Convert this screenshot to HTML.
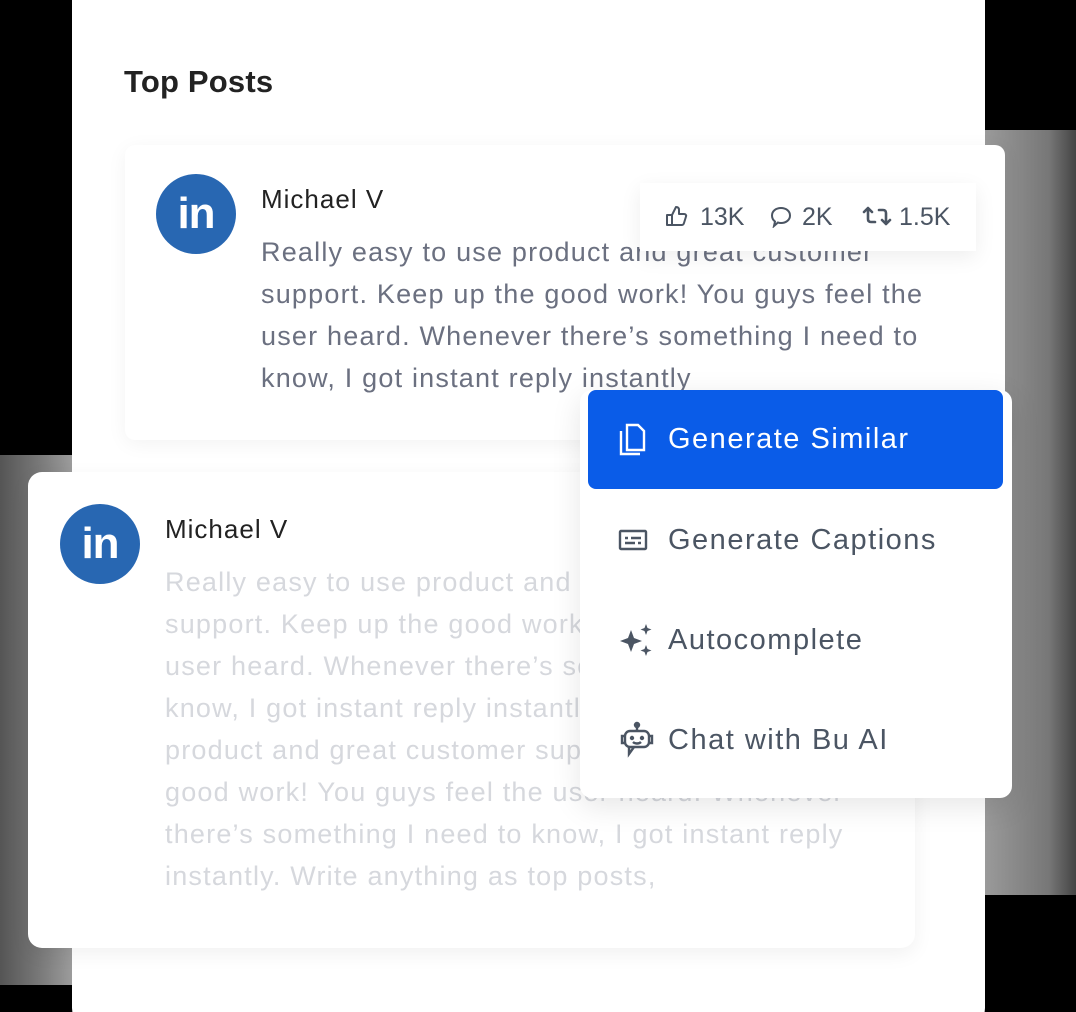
<!DOCTYPE html>
<html><head><meta charset="utf-8"><style>
*{margin:0;padding:0;box-sizing:border-box}
html,body{width:1076px;height:1012px;overflow:hidden}
body{background:#000;position:relative;font-family:"Liberation Sans",sans-serif}
.abs{position:absolute}
.noiseR{left:985px;top:130px;width:91px;height:765px;background:linear-gradient(90deg,#9a9a9a,#777 70%,#444)}
.noiseL{left:0;top:455px;width:76px;height:530px;background:linear-gradient(270deg,#a0a0a0,#777 50%,#555)}
.main{left:72px;top:-30px;width:913px;height:1060px;background:#fff;border-radius:22px}
.title{left:124px;top:64px;font-size:31px;font-weight:bold;color:#222;letter-spacing:0.2px}
.card1{left:125px;top:145px;width:880px;height:295px;background:#fff;box-shadow:0 4px 20px rgba(0,0,0,.05);border-radius:10px}
.avatar{width:80px;height:80px;border-radius:50%;background:#2867b2;color:#fff;font-weight:bold;font-size:44px;text-align:center;line-height:80px;letter-spacing:-1px}
.name{font-size:26px;color:#222;letter-spacing:1px}
.body{font-size:27px;line-height:42px;color:#6b7080;letter-spacing:1.2px;white-space:nowrap}
.stats{left:640px;top:183px;width:336px;height:68px;background:#fff;box-shadow:0 6px 20px rgba(0,0,0,.07);font-size:25px;color:#4b5563}
.stats .t,.stats svg{position:absolute}
.stats .t{top:20px}
.card2{left:28px;top:472px;width:887px;height:476px;background:#fff;border-radius:14px;box-shadow:0 6px 20px rgba(0,0,0,.06)}
.menu{left:580px;top:390px;width:432px;height:408px;background:#fff;border-radius:12px;box-shadow:0 8px 30px rgba(0,0,0,.1)}
.item{position:absolute;left:0;width:432px;height:100px;display:flex;align-items:center;font-size:29px;color:#4b5563;padding-left:38px;letter-spacing:1.5px;white-space:nowrap}
.item .ic{width:50px;display:flex;align-items:center}
.active{left:8px;width:415px;background:#0a5ce8;color:#fff;border-radius:8px;padding-left:30px}
</style></head><body>
<div class="abs noiseR"></div>
<div class="abs noiseL"></div>
<div class="abs main"></div>
<div class="abs title">Top Posts</div>
<div class="abs card1"></div>
<div class="abs avatar" style="left:156px;top:174px">in</div>
<div class="abs name" style="left:261px;top:184px">Michael V</div>
<div class="abs body" style="left:261px;top:231px">Really easy to use product and great customer<br>support. Keep up the good work! You guys feel the<br>user heard. Whenever there’s something I need to<br>know, I got instant reply instantly</div>
<div class="abs stats">
<svg style="left:26px;top:22px" width="22" height="22" viewBox="0 0 22 22" fill="none" stroke="#4b5563" stroke-width="2" stroke-linejoin="round"><path d="M1 10h5v10H1zM6 10l4-8c2 0 3 1 3 3v4h5c1.5 0 2.5 1 2 2.5l-2 6.5c-.3 1-1 2-2 2H6"/></svg>
<span class="t" style="left:60px">13K</span>
<svg style="left:130px;top:23px" width="22" height="22" viewBox="0 0 22 22" fill="none" stroke="#4b5563" stroke-width="2"><path d="M11 2c5 0 9 3 9 7.5S16 17 11 17c-1 0-2 0-3-.5L4 20l1-4.5C3 14 2 12 2 9.5 2 5 6 2 11 2z"/></svg>
<span class="t" style="left:162px">2K</span>
<svg style="left:222px;top:22px" width="30" height="22" viewBox="0 0 30 22" fill="none" stroke="#4b5563" stroke-width="2.6" stroke-linecap="round" stroke-linejoin="round"><path d="M2 7l4-4 4 4M6 3v11c0 2 1 3 3 3h4M28 15l-4 4-4-4M24 19V8c0-2-1-3-3-3h-4"/></svg>
<span class="t" style="left:259px">1.5K</span>
</div>
<div class="abs card2"></div>
<div class="abs avatar" style="left:60px;top:504px">in</div>
<div class="abs name" style="left:165px;top:514px">Michael V</div>
<div class="abs body" style="left:165px;top:561px;color:#d6d8dd">Really easy to use product and great customer<br>support. Keep up the good work! You guys feel the<br>user heard. Whenever there’s something I need to<br>know, I got instant reply instantly. Really easy to use<br>product and great customer support. Keep up the<br>good work! You guys feel the user heard. Whenever<br>there’s something I need to know, I got instant reply<br>instantly. Write anything as top posts,</div>
<div class="abs menu">
<div class="item active" style="top:0;height:99px"><span class="ic"><svg width="30" height="34" viewBox="0 0 30 34" fill="none" stroke="#fff" stroke-width="2.4"><path d="M3 8v23h19"/><path d="M9 2h11l6 6v19H9z"/></svg></span>Generate Similar</div>
<div class="item" style="top:100px"><span class="ic"><svg width="30" height="24" viewBox="0 0 30 24" fill="none" stroke="#4b5563" stroke-width="2.4"><rect x="2" y="3" width="26" height="18" rx="1"/><path d="M7 10h3M13 10h10M7 15h10M20 15h3"/></svg></span>Generate Captions</div>
<div class="item" style="top:200px"><span class="ic"><svg width="36" height="36" viewBox="0 0 36 36" fill="#4b5563"><path d="M13 8l3 8 8 3-8 3-3 8-3-8-8-3 8-3z"/><path d="M28 2l1.5 4 4 1.5-4 1.5-1.5 4-1.5-4-4-1.5 4-1.5z"/><path d="M28 23l1.5 4 4 1.5-4 1.5-1.5 4-1.5-4-4-1.5 4-1.5z"/></svg></span>Autocomplete</div>
<div class="item" style="top:300px"><span class="ic"><svg width="38" height="38" viewBox="0 0 38 38" fill="none" stroke="#4b5563" stroke-width="2.4"><circle cx="19" cy="4" r="2" fill="#4b5563"/><path d="M19 6v4"/><rect x="7" y="10" width="24" height="16" rx="5"/><path d="M7 15H4v7h3M31 15h3v7h-3"/><circle cx="14" cy="17" r="1" fill="#4b5563"/><circle cx="24" cy="17" r="1" fill="#4b5563"/><path d="M15 21c2 2 6 2 8 0"/><path d="M11 26v7l5-7"/></svg></span>Chat with Bu AI</div>
</div>
</body></html>
